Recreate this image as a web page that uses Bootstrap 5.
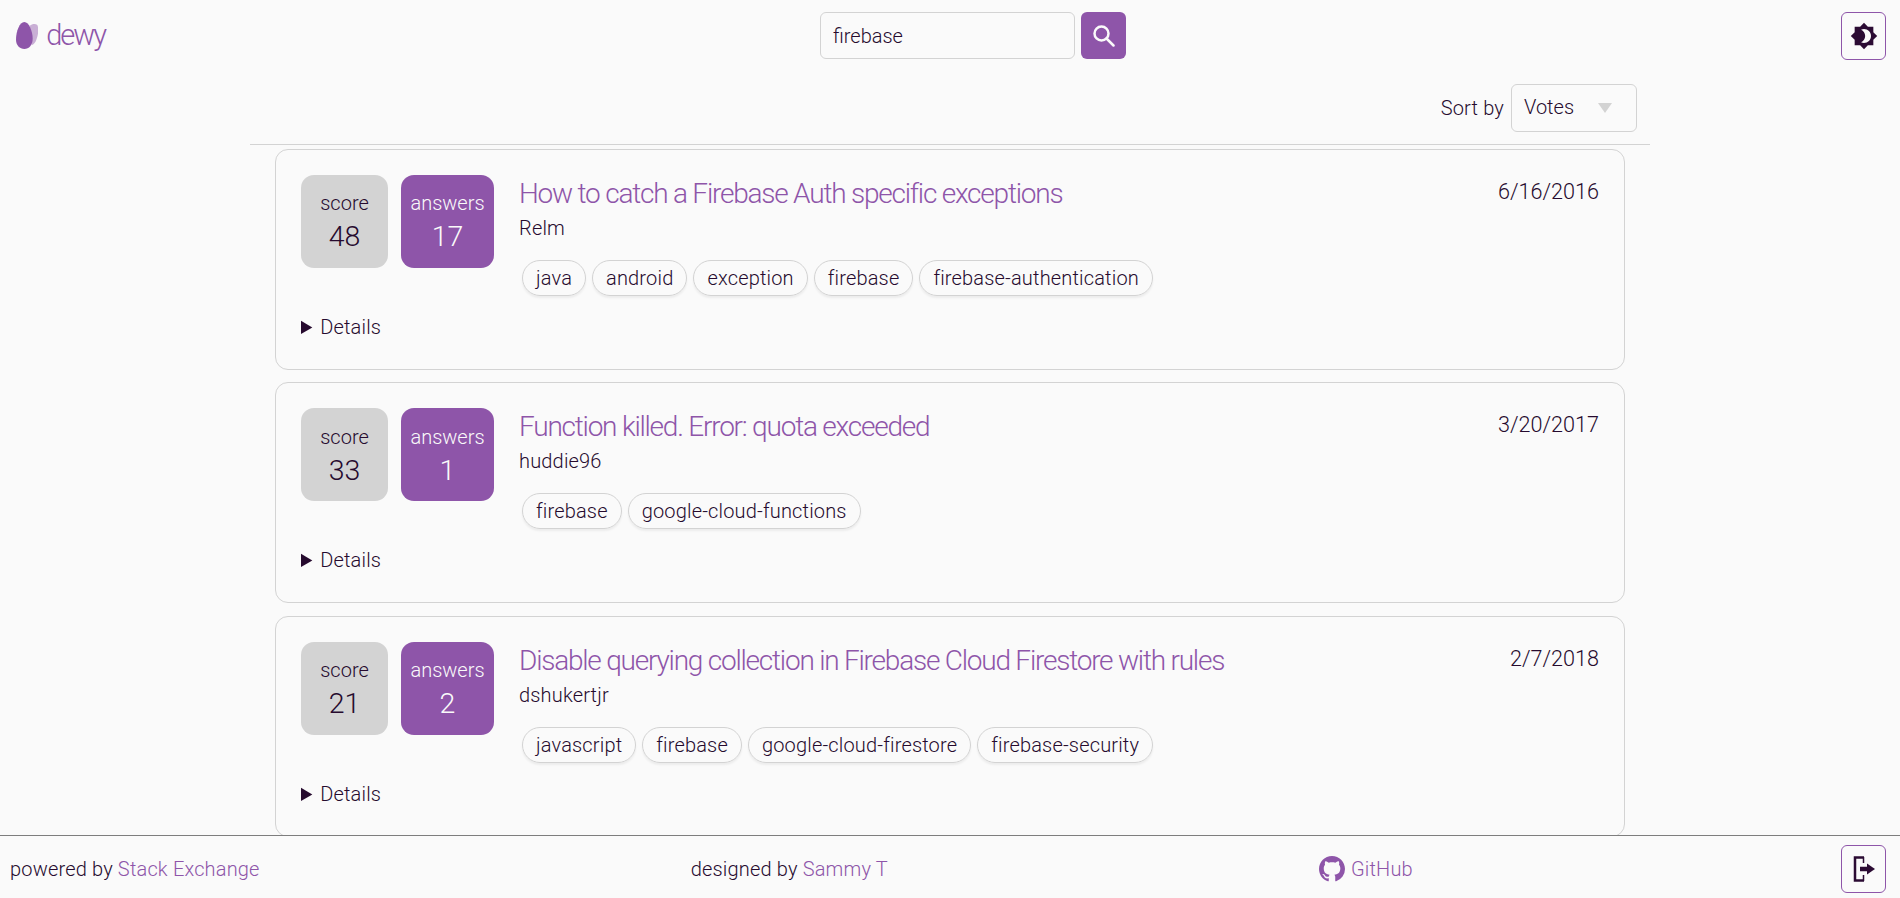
<!DOCTYPE html>
<html lang="en">
<head>
    <meta charset="UTF-8">
    <title>dewy</title>
    <link href="https://cdn.jsdelivr.net/npm/bootstrap@5.3.3/dist/css/bootstrap.min.css" rel="stylesheet">
    <style>
        html, body { height: 100%; }
        body {
            background: #fafafa;
            color: #260a2e;
            font-family: Roboto, "Liberation Sans", sans-serif;
            font-weight: 300;
            font-size: 20px;
            letter-spacing: .17px;
            overflow: hidden;
        }
        a { color: #8e55a9; text-decoration: none; }
        .app-top { height: 71px; padding: 12px 14px 12px 16px; flex: none; }
        .logo-link { width: 89px; font-size: 29px; letter-spacing: -2px; gap: 8px; }
        .search-form { gap: 6px; }
        .search-box {
            width: 255px; height: 47px; background: #fafafa; border: 1px solid #d3d3d3;
            border-radius: 6px; font-size: 20px; font-weight: 300; color: #260a2e; padding: 0 12px;
        }
        .search-box:focus { background: #fafafa; box-shadow: none; border-color: #d3d3d3; color: #260a2e; }
        .purple-btn, .purple-btn:hover { width: 45px; height: 47px; background: #8e55a9; border: 0; border-radius: 6px; padding: 0; }
        .icon-btn, .icon-btn:hover { width: 45px; height: 48px; background: transparent; border: 1px solid #8e55a9; border-radius: 6px; padding: 0; color: #2b0b33; }
        .content-wrap { width: 1400px; flex: 1 1 0; min-height: 0; overflow: hidden; }
        .sort-row { height: 74px; padding-right: 13px; padding-bottom: 12px; border-bottom: 1px solid #d3d3d3; gap: 7px; }
        .sort-label { margin-bottom: 9px; }
        .sort-btn, .sort-btn:hover, .sort-btn:active {
            width: 126px; height: 48px; background: transparent !important; border: 1px solid #d3d3d3 !important; border-radius: 6px;
            color: #260a2e !important; font-size: 20px; font-weight: 300; padding: 0 24px 2px 12px;
        }
        .sort-btn::after { border-top: 10px solid #d3d3d3; border-left: 7px solid transparent; border-right: 7px solid transparent; border-bottom: 0; margin: 2px 0 0 0; }
        .question-list { padding: 4px 25px 0; gap: 12.250px; }
        .question-card { height: 221px; background: transparent; border: 1px solid #d3d3d3; border-radius: 13px; padding: 25px 25px 0; color: #260a2e; }
        .stat-box { height: 93px; border-radius: 13px; line-height: 1; letter-spacing: 0; padding-top: 2px; }
        .stat-score { width: 87px; background: #d3d3d3; }
        .stat-answers { width: 93px; background: #8e55a9; color: #fafafa; margin-left: 13px; }
        .stat-value { font-size: 28.500px; margin-top: 10px; }
        .question-main { margin-left: 25px; margin-top: 1px; }
        .question-title { font-size: 28px; font-weight: 300; letter-spacing: -1.220px; line-height: 36px; margin: 0; }
        .question-owner { line-height: 24px; margin-top: 4px; }
        .tag-row { gap: 6px; margin: 20px 0 0 3px; }
        .tag-pill { height: 36px; padding: 0 13px; border: 1px solid #d3d3d3; border-radius: 18px; line-height: 35px; box-shadow: 0 2px 2px #ececec; }
        .question-date { font-size: 21.600px; letter-spacing: 0; line-height: 33px; }
        .details-row { margin-top: 18px; line-height: 27px; }
        .details-row summary { cursor: pointer; }
        .details-label { margin-left: -2px; }
        .app-foot { height: 63px; border-top: 1px solid #7d7d7d; padding: 4px 14px 0 10px; flex: none; }
        .github-link { gap: 6px; margin-right: -3px; }
    </style>
</head>
<body class="d-flex flex-column">
<!-- barra superior -->
<header class="app-top d-flex justify-content-between align-items-center">
    <a href="#" class="logo-link d-flex align-items-center">
        <svg width="24" height="30" viewBox="0 0 24 30">
            <path d="M15 4C17 2 21 1.500 23 3C25 7 24 14 22 19C21 22 19 24 17 25Z" fill="#8e55a9" opacity=".45"/>
            <path d="M9 0C14 0 18 10 18 18C18 25 14 29 9 29C4 29 0 25 0 19C0 10 4 0 9 0Z" fill="#8e55a9"/>
        </svg>
        <span>dewy</span>
    </a>
    <form class="search-form d-flex m-0">
        <input type="text" class="form-control search-box" value="firebase">
        <button type="button" class="btn purple-btn d-flex align-items-center justify-content-center" aria-label="Search">
            <svg width="23" height="23" viewBox="0 0 23 23" fill="none" stroke="#fafafa" stroke-width="2.500"><circle cx="9.500" cy="9.500" r="7"/><path d="M14.500 14.500L21.500 21.500" stroke-linecap="round"/></svg>
        </button>
    </form>
    <button type="button" class="btn icon-btn d-flex align-items-center justify-content-center" aria-label="Theme">
        <svg width="28" height="28" viewBox="0 0 24 24" fill="currentColor"><path d="M20 8.690V4h-4.690L12 .690 8.690 4H4v4.690L.690 12 4 15.310V20h4.690L12 23.310 15.310 20H20v-4.690L23.310 12 20 8.690zM12 18c-.890 0-1.740-.200-2.500-.550C11.560 16.500 13 14.420 13 12s-1.440-4.500-3.500-5.450C10.260 6.200 11.110 6 12 6c3.310 0 6 2.690 6 6s-2.690 6-6 6z"/></svg>
    </button>
</header>

<!-- lista de preguntas -->
<main class="content-wrap mx-auto d-flex flex-column">
    <div class="sort-row d-flex justify-content-end align-items-end flex-shrink-0">
        <span class="sort-label">Sort by</span>
        <button type="button" class="btn sort-btn dropdown-toggle d-flex align-items-center justify-content-between">Votes</button>
    </div>
    <div class="question-list d-flex flex-column">
        <article class="card question-card flex-shrink-0">
            <div class="d-flex">
                <div class="stat-box stat-score d-flex flex-column align-items-center justify-content-center"><span>score</span><span class="stat-value">48</span></div>
                <div class="stat-box stat-answers d-flex flex-column align-items-center justify-content-center"><span>answers</span><span class="stat-value">17</span></div>
                <div class="question-main flex-grow-1">
                    <h2 class="question-title"><a href="#">How to catch a Firebase Auth specific exceptions</a></h2>
                    <div class="question-owner">Relm</div>
                    <div class="tag-row d-flex">
                        <span class="tag-pill">java</span><span class="tag-pill">android</span><span class="tag-pill">exception</span><span class="tag-pill">firebase</span><span class="tag-pill">firebase-authentication</span>
                    </div>
                </div>
                <div class="question-date">6/16/2016</div>
            </div>
            <details class="details-row"><summary><span class="details-label">Details</span></summary></details>
        </article>
        <article class="card question-card flex-shrink-0">
            <div class="d-flex">
                <div class="stat-box stat-score d-flex flex-column align-items-center justify-content-center"><span>score</span><span class="stat-value">33</span></div>
                <div class="stat-box stat-answers d-flex flex-column align-items-center justify-content-center"><span>answers</span><span class="stat-value">1</span></div>
                <div class="question-main flex-grow-1">
                    <h2 class="question-title"><a href="#">Function killed. Error: quota exceeded</a></h2>
                    <div class="question-owner">huddie96</div>
                    <div class="tag-row d-flex">
                        <span class="tag-pill">firebase</span><span class="tag-pill">google-cloud-functions</span>
                    </div>
                </div>
                <div class="question-date">3/20/2017</div>
            </div>
            <details class="details-row"><summary><span class="details-label">Details</span></summary></details>
        </article>
        <article class="card question-card flex-shrink-0">
            <div class="d-flex">
                <div class="stat-box stat-score d-flex flex-column align-items-center justify-content-center"><span>score</span><span class="stat-value">21</span></div>
                <div class="stat-box stat-answers d-flex flex-column align-items-center justify-content-center"><span>answers</span><span class="stat-value">2</span></div>
                <div class="question-main flex-grow-1">
                    <h2 class="question-title"><a href="#">Disable querying collection in Firebase Cloud Firestore with rules</a></h2>
                    <div class="question-owner">dshukertjr</div>
                    <div class="tag-row d-flex">
                        <span class="tag-pill">javascript</span><span class="tag-pill">firebase</span><span class="tag-pill">google-cloud-firestore</span><span class="tag-pill">firebase-security</span>
                    </div>
                </div>
                <div class="question-date">2/7/2018</div>
            </div>
            <details class="details-row"><summary><span class="details-label">Details</span></summary></details>
        </article>
    </div>
</main>

<!-- pie -->
<footer class="app-foot d-flex justify-content-between align-items-center">
    <span>powered by <a href="#">Stack Exchange</a></span>
    <span>designed by <a href="#">Sammy T</a></span>
    <a href="#" class="github-link d-flex align-items-center">
        <svg width="26" height="26" viewBox="0 0 16 16" fill="#8e55a9"><path d="M8 0C3.580 0 0 3.580 0 8c0 3.540 2.290 6.530 5.470 7.590.400.070.550-.170.550-.380 0-.190-.010-.820-.010-1.490-2.010.370-2.530-.490-2.690-.940-.090-.230-.480-.940-.820-1.130-.280-.150-.680-.520-.010-.530.630-.010 1.080.580 1.230.820.720 1.210 1.870.870 2.330.660.070-.520.280-.870.510-1.070-1.780-.200-3.640-.890-3.640-3.950 0-.870.310-1.590.820-2.150-.080-.200-.360-1.020.080-2.120 0 0 .670-.210 2.200.820.640-.180 1.320-.270 2-.270.680 0 1.360.090 2 .270 1.530-1.040 2.200-.820 2.200-.820.440 1.100.160 1.920.080 2.120.510.560.820 1.270.820 2.150 0 3.070-1.870 3.750-3.650 3.950.290.250.540.730.540 1.480 0 1.070-.010 1.930-.010 2.200 0 .210.150.460.550.380A8.013 8.013 0 0 0 16 8c0-4.420-3.580-8-8-8z"/></svg>
        <span>GitHub</span>
    </a>
    <button type="button" class="btn icon-btn d-flex align-items-center justify-content-center" aria-label="Log out">
        <svg width="24" height="26" viewBox="0 0 24 26" fill="none" stroke="currentColor" stroke-width="2.500"><path d="M12 1.500H3V24.500H12"/><path d="M11.500 1V7M11.500 19V25" stroke-width="1.500"/><path d="M8 13H16" stroke-width="4.500"/><path d="M15 7.500L23 13L15 18.500Z" fill="currentColor" stroke="none"/></svg>
    </button>
</footer>
</body>
</html>
